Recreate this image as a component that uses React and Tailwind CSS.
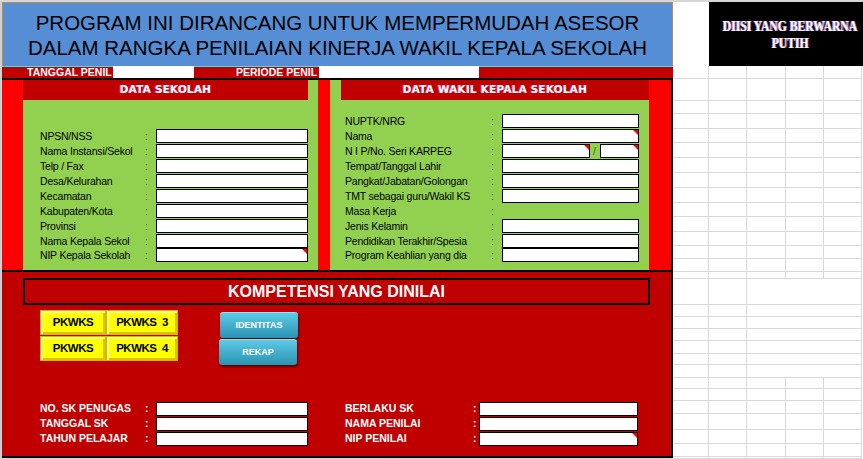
import React from 'react';

const leftRows = [
  { label: 'NPSN/NSS' },
  { label: 'Nama Instansi/Sekol' },
  { label: 'Telp / Fax' },
  { label: 'Desa/Kelurahan' },
  { label: 'Kecamatan' },
  { label: 'Kabupaten/Kota' },
  { label: 'Provinsi' },
  { label: 'Nama Kepala Sekol', h: 'h-[14px]' },
  { label: 'NIP Kepala Sekolah', h: 'h-[14px]', mark: true },
];

const rightRows = [
  { label: 'NUPTK/NRG' },
  { label: 'Nama', mark: true },
  { label: 'N I P/No. Seri KARPEG', split: true },
  { label: 'Tempat/Tanggal Lahir' },
  { label: 'Pangkat/Jabatan/Golongan' },
  { label: 'TMT sebagai guru/Wakil KS' },
  { label: 'Masa Kerja', empty: true },
  { label: 'Jenis Kelamin' },
  { label: 'Pendidikan Terakhir/Spesia', h: 'h-[14px]' },
  { label: 'Program Keahlian yang dia', h: 'h-[14px]' },
];

// grid lines of the spreadsheet to the right of the form
const sheetRows = [
  { h: 'h-[13px]' }, { h: 'h-[22px]' }, { h: 'h-[13px]' }, { h: 'h-[15px]' },
  { h: 'h-[14px]' }, { h: 'h-[15px]' }, { h: 'h-[15px]' }, { h: 'h-[15px]' },
  { h: 'h-[15px]' }, { h: 'h-[14px]' }, { h: 'h-[15px]' }, { h: 'h-[14px]' },
  { h: 'h-[13px]' }, { h: 'h-[13px]' }, { h: 'h-[7px]' },
  { h: 'h-[26px]', merged: true }, { h: 'h-[12px]', merged: true },
  { h: 'h-[12px]', merged: true }, { h: 'h-[12px]', merged: true },
  { h: 'h-[13px]', merged: true }, { h: 'h-[11px]', merged: true },
  { h: 'h-[13px]', merged: true },
  { h: 'h-[11px]' }, { h: 'h-[12px]' }, { h: 'h-[13px]' }, { h: 'h-[16px]' },
  { h: 'h-[14px]' }, { h: 'h-[13px]' }, { h: 'h-[2px]' },
];

const cell = 'shrink-0 h-full border-r border-b border-[#d9d9d9]';

function Box({ className = '', mark }) {
  return (
    <div className={`relative h-[14px] bg-white border border-black ${className}`}>
      {mark && (
        <div className="absolute top-0 right-0 w-0 h-0 border-l-[5px] border-l-transparent border-t-[5px] border-t-[#ff0000]" />
      )}
    </div>
  );
}

function PanelHeader({ children }) {
  return (
    <div className="h-[20px] bg-[#c00000] flex items-center justify-center text-white font-['DejaVu_Sans',sans-serif] font-bold text-[10.5px] tracking-[0.2px] [text-shadow:-1px_0_#e0409a]">
      {children}
    </div>
  );
}

function YellowBtn({ children, w }) {
  return (
    <div className={`${w} h-[25px] bg-[#ffff00] border border-[#d6b800] shadow-[inset_2px_2px_0_#ffff9a,inset_-2px_-2px_0_#d8c400] flex items-center justify-center text-black font-bold text-[11.5px] tracking-[-0.5px] whitespace-pre`}>
      {children}
    </div>
  );
}

function BlueBtn({ children, className = '' }) {
  return (
    <div className={`w-[78px] h-[26px] rounded-[3px] bg-gradient-to-b from-[#5ccbe6] to-[#2a93b3] border-t border-[#8fe0f2] shadow-[1px_2px_2px_rgba(0,0,0,0.5)] flex items-center justify-center text-white font-bold text-[9px] ${className}`}>
      {children}
    </div>
  );
}

function BottomField({ label, labelW, colonW, boxW, mark }) {
  return (
    <div className="flex items-center h-[15px]">
      <div className={`${labelW} text-white font-bold text-[10.5px] whitespace-nowrap`}>{label}</div>
      <div className={`${colonW} text-white font-bold text-[10px]`}>:</div>
      <Box className={boxW} mark={mark} />
    </div>
  );
}

export default function App() {
  return (
    <div className="w-[863px] h-[459px] overflow-hidden bg-white flex flex-col font-['Liberation_Sans',Arial,sans-serif]">
      <div className="h-[2px] shrink-0 bg-[#d6d6d6]" />
      <div className="flex flex-1 min-h-0">
        <div className="w-[2px] shrink-0 bg-[#d0d0d0]" />

        {/* form */}
        <div className="w-[671px] shrink-0 flex flex-col">
          <div className="h-[64px] bg-[#558ed5] border-x border-t border-[#c08a48] flex flex-col items-center justify-center text-black text-[20.5px] leading-[25px] whitespace-nowrap">
            <div>PROGRAM INI DIRANCANG UNTUK MEMPERMUDAH ASESOR</div>
            <div>DALAM RANGKA PENILAIAN KINERJA WAKIL KEPALA SEKOLAH</div>
          </div>

          <div className="h-[12px] flex text-white font-bold text-[10.5px] leading-[11px]">
            <div className="w-[111px] bg-[#c00000] border-t border-[#33e8ea] pl-[25px] whitespace-nowrap">TANGGAL PENIL</div>
            <div className="w-[81px] bg-white" />
            <div className="w-[125px] bg-[#c00000] border-t border-[#33e8ea] pl-[42px] whitespace-nowrap">PERIODE PENIL</div>
            <div className="w-[160px] bg-white" />
            <div className="flex-1 bg-[#c00000] border-t border-[#33e8ea]" />
          </div>

          <div className="h-[2px] bg-black" />

          {/* data panels */}
          <div className="h-[190px] flex border-r-2 border-black">
            <div className="w-[21px] bg-[#ff0000]" />
            <div className="w-[295px] bg-[#92d050] flex flex-col">
              <div className="pr-[10px]">
                <PanelHeader>DATA SEKOLAH</PanelHeader>
              </div>
              <div className="pt-[29px] pl-[17px] text-[10.5px] tracking-[-0.2px] text-black">
                {leftRows.map((r) => (
                  <div key={r.label} className={`flex ${r.h || 'h-[15px]'}`}>
                    <div className="w-[94px] whitespace-nowrap leading-[14px]">{r.label}</div>
                    <div className="w-[22px] pl-[11px] leading-[14px] text-[#8a6a10]">:</div>
                    <Box className="w-[152px]" mark={r.mark} />
                  </div>
                ))}
              </div>
            </div>
            <div className="w-[12px] bg-[#ff0000]" />
            <div className="w-[319px] bg-[#92d050] flex flex-col">
              <div className="pl-[11px]">
                <PanelHeader>DATA WAKIL KEPALA SEKOLAH</PanelHeader>
              </div>
              <div className="pt-[14px] pl-[15px] text-[10.5px] tracking-[-0.2px] text-black">
                {rightRows.map((r) => (
                  <div key={r.label} className={`flex ${r.h || 'h-[15px]'}`}>
                    <div className="w-[124px] whitespace-nowrap leading-[14px]">{r.label}</div>
                    <div className="w-[33px] pl-[22px] leading-[14px] text-[#555]">:</div>
                    {r.empty ? null : r.split ? (
                      <div className="flex">
                        <Box className="w-[88px]" mark />
                        <div className="w-[10px] pl-[3px] leading-[14px] text-[#3a6a20]">/</div>
                        <Box className="w-[39px]" mark />
                      </div>
                    ) : (
                      <Box className="w-[137px]" mark={r.mark} />
                    )}
                  </div>
                ))}
              </div>
            </div>
            <div className="w-[22px] bg-[#ff0000]" />
          </div>

          <div className="h-[2px] bg-black" />

          {/* kompetensi */}
          <div className="h-[186px] bg-[#c00000] border-r-2 border-b-2 border-black pt-[6px] flex flex-col">
            <div className="ml-[21px] w-[627px] h-[27px] border-2 border-black flex items-center justify-center text-white font-bold text-[16px]">
              KOMPETENSI YANG DINILAI
            </div>

            <div className="mt-[5px] ml-[38px] flex h-[55px]">
              <div className="grid grid-cols-[66px_72px] grid-rows-[25px_25px] gap-y-px">
                <YellowBtn w="w-[66px]">PKWKS</YellowBtn>
                <YellowBtn w="w-[72px]">{'PKWKS  3'}</YellowBtn>
                <YellowBtn w="w-[66px]">PKWKS</YellowBtn>
                <YellowBtn w="w-[72px]">{'PKWKS  4'}</YellowBtn>
              </div>
              <div className="ml-[42px] mt-[2px] flex flex-col gap-px">
                <BlueBtn>IDENTITAS</BlueBtn>
                <BlueBtn className="-ml-px">REKAP</BlueBtn>
              </div>
            </div>

            <div className="mt-[36px] ml-[38px] flex">
              <div className="flex flex-col">
                <BottomField label="NO. SK PENUGAS" labelW="w-[100px]" colonW="w-[16px] pl-[5px]" boxW="w-[152px]" />
                <BottomField label="TANGGAL SK" labelW="w-[100px]" colonW="w-[16px] pl-[5px]" boxW="w-[152px]" />
                <BottomField label="TAHUN PELAJAR" labelW="w-[100px]" colonW="w-[16px] pl-[5px]" boxW="w-[152px]" />
              </div>
              <div className="ml-[37px] flex flex-col">
                <BottomField label="BERLAKU SK" labelW="w-[123px]" colonW="w-[11px] pl-[5px]" boxW="w-[159px]" />
                <BottomField label="NAMA PENILAI" labelW="w-[123px]" colonW="w-[11px] pl-[5px]" boxW="w-[159px]" />
                <BottomField label="NIP PENILAI" labelW="w-[123px]" colonW="w-[11px] pl-[5px]" boxW="w-[159px]" mark />
              </div>
            </div>
          </div>
          <div className="flex-1 bg-[#d9d9d9]" />
        </div>

        {/* spreadsheet area */}
        <div className="flex-1 flex flex-col">
          <div className="h-[64px] flex shrink-0">
            <div className="w-[36px] bg-white" />
            <div className="flex-1 bg-black flex flex-col items-center justify-center pt-[2px] text-white font-['Liberation_Serif',serif] font-bold text-[14px] leading-[17px] whitespace-nowrap [text-shadow:-1px_0_#6a8cff,1px_0_#ff6a6a]">
              <div className="scale-x-[0.83]">DIISI YANG BERWARNA</div>
              <div className="scale-x-[0.83]">PUTIH</div>
            </div>
          </div>
          {sheetRows.map((r, i) => (
            <div key={i} className={`flex shrink-0 ${r.h}`}>
              <div className={`${cell} w-[36px]`} />
              <div className={`${cell} w-[38px]`} />
              {r.merged ? (
                <div className={`${cell} w-[115px]`} />
              ) : (
                <>
                  <div className={`${cell} w-[39px]`} />
                  <div className={`${cell} w-[38px]`} />
                  <div className={`${cell} w-[38px]`} />
                </>
              )}
            </div>
          ))}
        </div>
      </div>
    </div>
  );
}
